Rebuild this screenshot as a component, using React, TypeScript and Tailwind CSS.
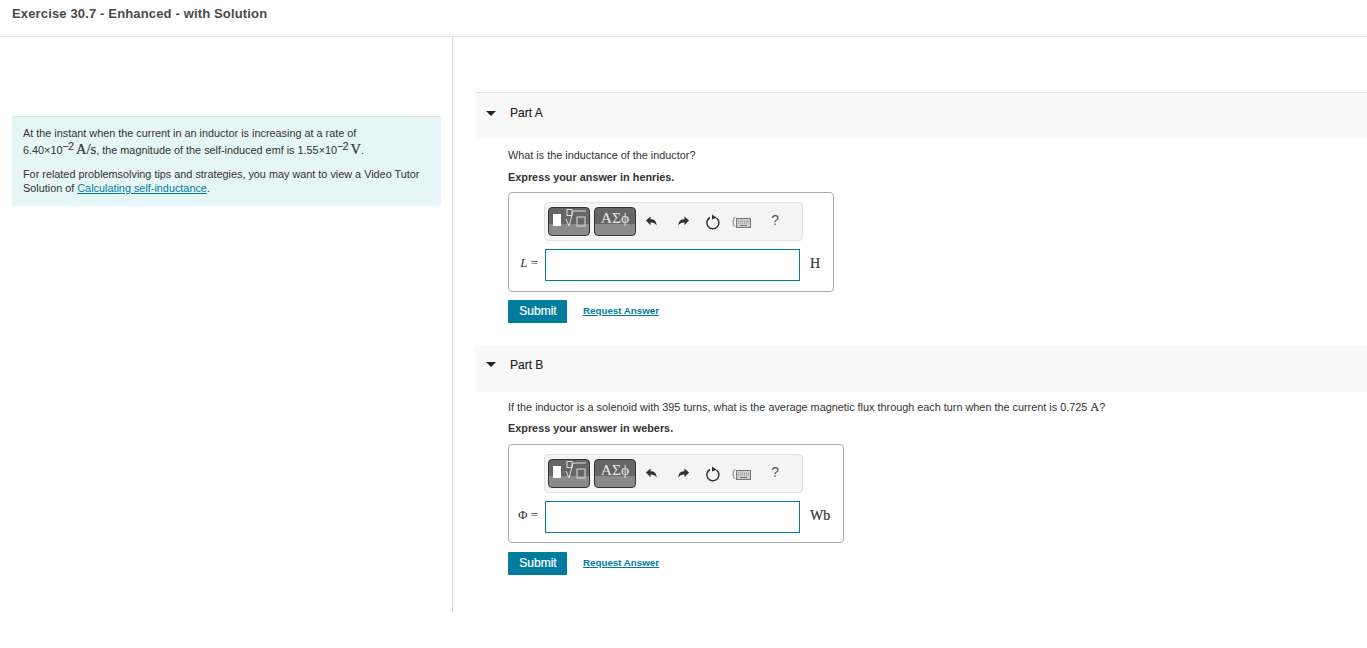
const serif = "font-['Liberation_Serif',serif]"

function Sup({ children }: { children: string }) {
  return <sup className="text-[11px] tracking-[-1px] leading-none relative -top-[4px] align-baseline">{children}</sup>
}

function Toolbar() {
  return (
    <div className="ml-[35px] w-[259px] h-[39px] bg-[#f4f4f4] border border-[#e2e2e2] rounded-[4px] flex items-center pl-[3px]">
      <div className="w-[42px] h-[29px] rounded-[4px] border border-[#333] bg-[linear-gradient(#666_0,#666_58%,#8a8a8a_60%,#8a8a8a_100%)] relative mt-[-1px]">
        <svg width="40" height="27" viewBox="0 0 40 27" className="absolute left-0 top-0">
          <rect x="4" y="6" width="8" height="12" fill="#fff" />
          <rect x="18" y="1.500" width="5" height="6" fill="none" stroke="#ddd" strokeWidth="1" />
          <path d="M17 11l3 7 4-15h13" fill="none" stroke="#ddd" strokeWidth="1" />
          <rect x="28" y="9" width="8" height="9" fill="none" stroke="#ddd" strokeWidth="1" />
        </svg>
      </div>
      <div className={`ml-[4px] w-[42px] h-[29px] rounded-[4px] border border-[#333] bg-[linear-gradient(#666_0,#666_58%,#8a8a8a_60%,#8a8a8a_100%)] mt-[-1px] text-[#e8e8e8] text-[15.500px] leading-[20px] text-center ${serif}`}>
        ΑΣϕ
      </div>
      <svg width="13" height="13" viewBox="0 0 14 14" className="ml-[9px]">
        <path d="M1 6l5-4.500v3c4 0 6.500 2 6.500 7-1.300-2.700-3-3.500-6.500-3.500v3z" fill="#333" />
      </svg>
      <svg width="13" height="13" viewBox="0 0 14 14" className="ml-[19px]">
        <path d="M13 6l-5-4.500v3c-4 0-6.500 2-6.500 7 1.300-2.700 3-3.500 6.500-3.500v3z" fill="#333" />
      </svg>
      <svg width="16" height="16" viewBox="0 0 16 16" className="ml-[15px] mt-[1px]">
        <path d="M5 3.500a6 6 0 1 0 6.500 0.500" fill="none" stroke="#333" strokeWidth="1.500" />
        <path d="M7 0.500l4.800 3.300-4.800 1.700z" fill="#333" />
      </svg>
      <span className="ml-[11px] mt-[1px] text-[10px] text-[#777] leading-none">(</span>
      <svg width="15" height="10" viewBox="0 0 15 10" className="ml-[1px] mt-[2px]">
        <rect x="0.500" y="0.500" width="14" height="9" fill="#cfcfcf" stroke="#777" />
        <path d="M2 3h11M2 5h11" stroke="#8a8a8a" strokeWidth="1" strokeDasharray="1 1" />
        <path d="M4 7.500h7" stroke="#777" strokeWidth="1" />
      </svg>
      <span className="ml-[20px] mt-[-3px] text-[14px] text-[#555] leading-none">?</span>
    </div>
  )
}

function AnswerBox({ label, unit, width, height }: { label: React.ReactNode; unit: string; width: string; height: string }) {
  return (
    <div className={`${width} ${height} border border-[#aaa] rounded-[4px] pt-[9px]`}>
      <Toolbar />
      <div className="flex items-center mt-[8px]">
        <div className={`w-[36px] text-right pr-[7px] pb-[4px] text-[13px] text-[#333] ${serif}`}>{label}</div>
        <div className="w-[255px] h-[32px] border-[1.500px] border-[#007c9e] bg-white" />
        <div className={`ml-[10px] pb-[3px] text-[14px] [-webkit-text-stroke:0.2px_#333] text-[#333] ${serif}`}>{unit}</div>
      </div>
    </div>
  )
}

function Actions({ top }: { top: string }) {
  return (
    <div className={`flex items-center ${top} h-[23px]`}>
      <button className="w-[59px] h-[23px] pb-[2px] pl-[1px] bg-[#007c9e] rounded-[1px] text-white text-[12px] [-webkit-text-stroke:0.2px_white]">Submit</button>
      <a className="ml-[16px] pb-[1px] text-[#007c9e] text-[9.750px] font-bold underline">Request Answer</a>
    </div>
  )
}

function PartHeader({ title, border, pad }: { title: string; border?: boolean; pad: string }) {
  return (
    <div className={`h-[47px] bg-[#f9f9f9] flex items-center pl-[11px] ${pad} ${border ? 'border-t border-[#e0e0e0]' : ''}`}>
      <div className="w-0 h-0 border-x-[5px] border-x-transparent border-t-[5px] border-t-[#222]" />
      <span className="ml-[14px] text-[12px] text-[#222] [-webkit-text-stroke:0.15px_#222]">{title}</span>
    </div>
  )
}

export default function App() {
  return (
    <div className="h-[648px] bg-white font-['Liberation_Sans',Arial,sans-serif] text-[#333] overflow-hidden">
      <header className="h-[37px] border-b border-[#e0e0e0] pl-[12px] pt-[6px] text-[13px] leading-[16px] font-bold tracking-[0.15px] text-[#4a4a4a]">
        Exercise 30.7 - Enhanced - with Solution
      </header>
      <div className="flex h-[575px]">
        <aside className="w-[453px] shrink-0 border-r border-[#c5d8e2] pl-[12px] pt-[79px]">
          <div className="w-[429px] h-[90px] bg-[#e6f5f6] border-t border-[#e0e6e6] pl-[11px] pt-[9px] text-[10.850px] leading-[14px] text-[#333]">
            <p>At the instant when the current in an inductor is increasing at a rate of</p>
            <p className="leading-[18px]">
              6.40×10<Sup>−2</Sup> <span className={`${serif} text-[14.500px] [-webkit-text-stroke:0.2px_#333]`}>A/s</span>, the magnitude of the self-induced emf is 1.55×10<Sup>−2</Sup> <span className={`${serif} text-[14.500px] [-webkit-text-stroke:0.2px_#333]`}>V</span>.
            </p>
            <p className="mt-[9px] -translate-y-[1px]">For related problemsolving tips and strategies, you may want to view a Video Tutor</p>
            <p className="-translate-y-[1px]">
              Solution of <a className="text-[#007c9e] underline">Calculating self-inductance</a>.
            </p>
          </div>
        </aside>
        <main className="flex-1 pl-[22px] pt-[55px]">
          <PartHeader title="Part A" border pad="pb-[6px]" />
          <div className="pl-[33px] pt-[9px]">
            <p className="text-[10.850px] leading-[14px]">What is the inductance of the inductor?</p>
            <p className="mt-[8px] text-[10.850px] leading-[14px] font-bold">Express your answer in henries.</p>
            <div className="mt-[8px]">
              <AnswerBox width="w-[326px]" height="h-[100px]" label={<><i>L</i> =</>} unit="H" />
            </div>
            <Actions top="mt-[8px]" />
          </div>
          <div className="mt-[22px]">
            <PartHeader title="Part B" pad="pb-[8px]" />
          </div>
          <div className="pl-[33px] pt-[8px]">
            <p className="text-[10.850px] leading-[14px]">
              If the inductor is a solenoid with 395 turns, what is the average magnetic flux through each turn when the current is 0.725 <span className={`${serif} text-[12.500px] [-webkit-text-stroke:0.2px_#333]`}>A</span>?
            </p>
            <p className="mt-[7px] text-[10.850px] leading-[14px] font-bold">Express your answer in webers.</p>
            <div className="mt-[9px]">
              <AnswerBox width="w-[336px]" height="h-[99px]" label={<>Φ =</>} unit="Wb" />
            </div>
            <Actions top="mt-[9px]" />
          </div>
        </main>
      </div>
    </div>
  )
}
